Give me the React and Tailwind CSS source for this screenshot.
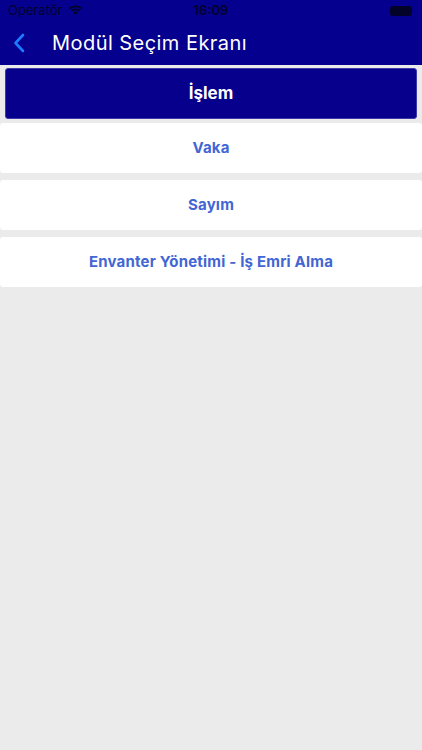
import React from "react";

const modules = ["Vaka", "Sayım", "Envanter Yönetimi - İş Emri Alma"];

function App() {
    return (
        <div className="min-h-[750px] bg-[#ebebeb] flex flex-col" style={{fontFamily: "Inter, 'Noto Sans', sans-serif"}}>
            {/* status bar + nav */}
            <div className="bg-[#05008e]">
                <div className="h-[21px] flex items-center justify-between px-[8px] text-[13px] text-[#03032a]">
                    <div className="flex items-center gap-[5px] w-[120px]">
                        <span className="font-normal">Operatör</span>
                        <svg width="15" height="11" viewBox="0 0 15 11" fill="#03032a">
                            <path d="M7.5 2.2c2.2 0 4.2.8 5.7 2.2l1.2-1.3C12.6 1.4 10.1.4 7.5.4S2.4 1.4.6 3.1l1.2 1.3C3.3 3 5.3 2.2 7.5 2.2z"/>
                            <path d="M7.5 5.2c1.4 0 2.6.5 3.6 1.4l1.2-1.3C11 4.1 9.3 3.4 7.5 3.4S4 4.1 2.7 5.3l1.2 1.3c1-.9 2.2-1.4 3.6-1.4z"/>
                            <path d="M7.5 6.6c-.9 0-1.7.3-2.3.9L7.5 10l2.3-2.5c-.6-.6-1.4-.9-2.3-.9z"/>
                        </svg>
                    </div>
                    <span className="font-semibold">16:09</span>
                    <div className="w-[120px] flex justify-end">
                        <div className="w-[22px] h-[10px] rounded-[3px] bg-[#03032a] mr-[2px]"></div>
                    </div>
                </div>
                <div className="h-[44px] flex items-center">
                    <svg className="ml-[13px]" width="12" height="20" viewBox="0 0 12 20" fill="none">
                        <path d="M10 2L2.5 10L10 18" stroke="#1e7bff" strokeWidth="2.6" strokeLinecap="round" strokeLinejoin="round"/>
                    </svg>
                    <span className="ml-[27px] text-[20px] text-white tracking-[0.45px]">Modül Seçim Ekranı</span>
                </div>
            </div>

            <div className="flex flex-col pt-[3px]">
                <div className="mx-[5px] h-[51px] bg-[#06008c] rounded-[3px] border border-[#3d3aa8] flex items-center justify-center">
                    <span className="text-white text-[17px] font-bold">İşlem</span>
                </div>
                <div className="flex flex-col gap-[7px] mt-[4px]">
                    {modules.map((m) => (
                        <div key={m} className="h-[50px] bg-white rounded-[3px] flex items-center justify-center">
                            <span className="text-[#4266d3] text-[15px] font-bold tracking-[0.2px]">{m}</span>
                        </div>
                    ))}
                </div>
            </div>
        </div>
    );
}

export default App;
